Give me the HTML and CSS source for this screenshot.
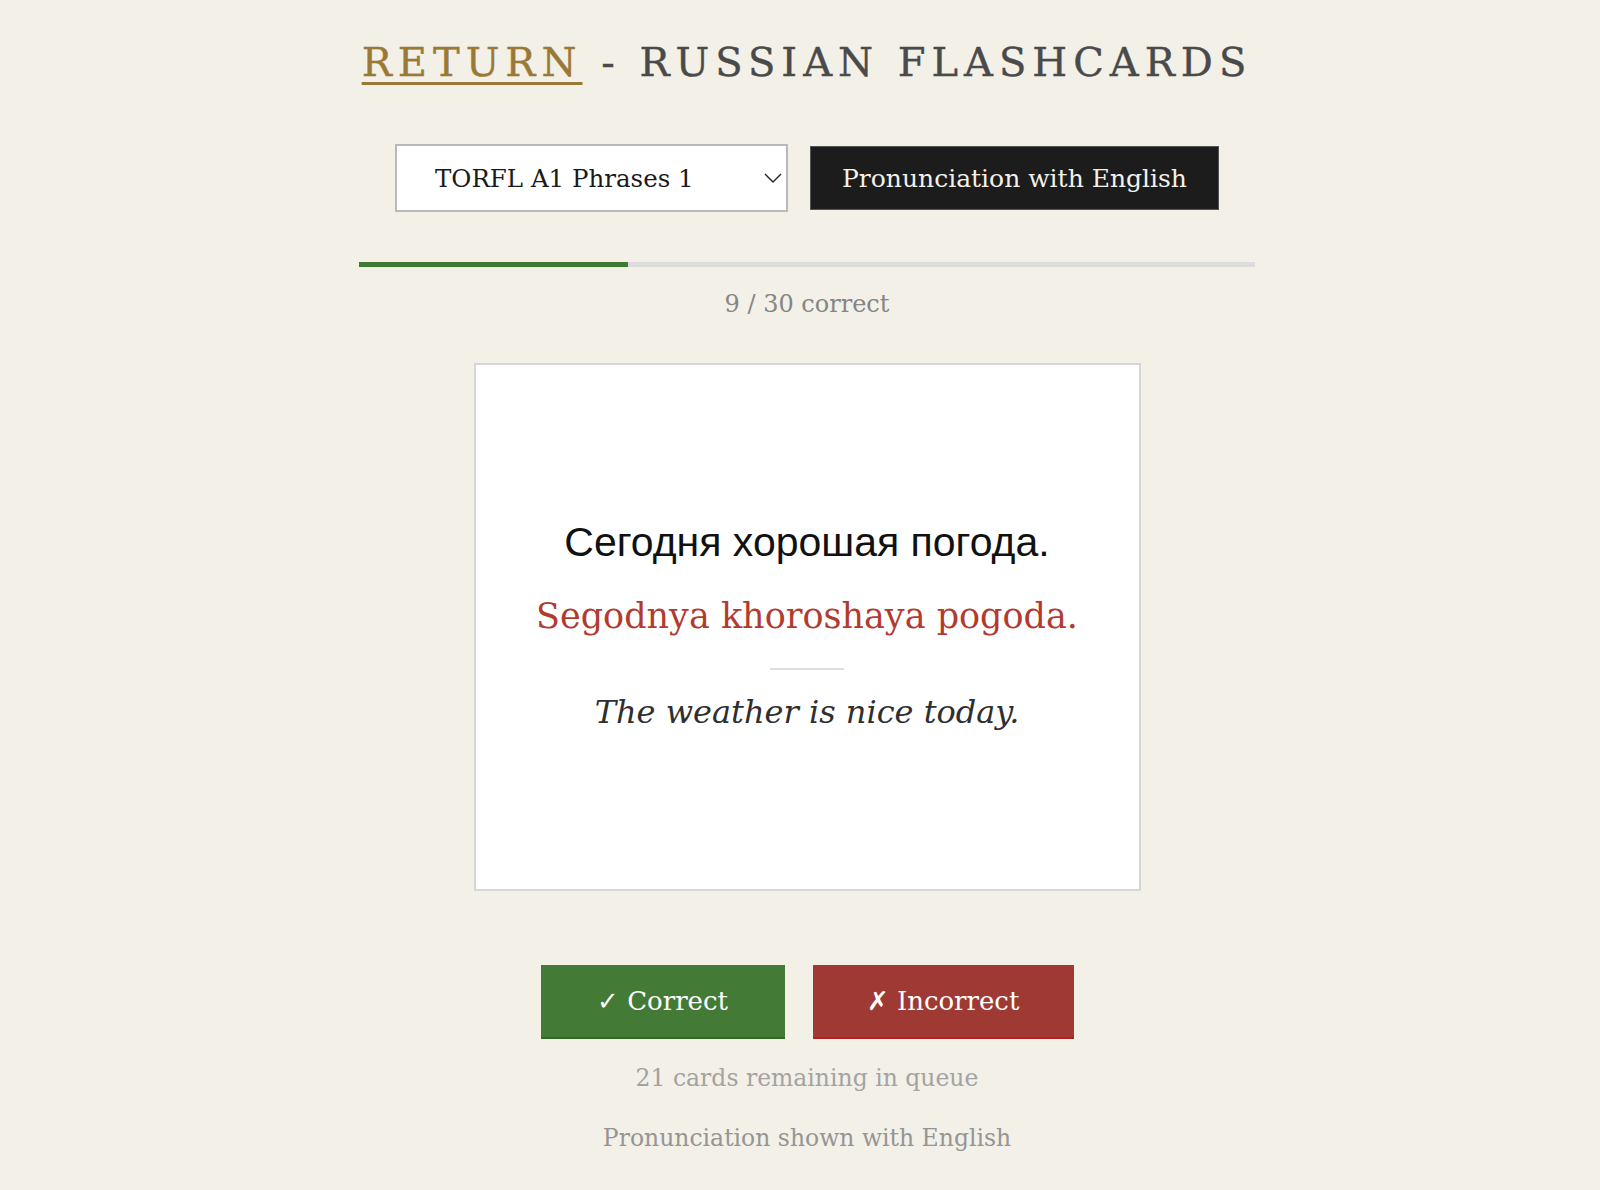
FILE: index.html
```html
<!DOCTYPE html>
<html>
<head>
<meta charset="utf-8">
<title>Russian Flashcards</title>
<link rel="stylesheet" href="styles.css">
</head>

<body>

<div id="page">
<div id="container">
    <h1 class="title"><a href="#" class="return_link">RETURN</a> - RUSSIAN FLASHCARDS</h1>

    <div class="controls">
        <div class="deck_select">
            <select class="deck">
                <option>TORFL A1 Phrases 1</option>
                <option>TORFL A1 Phrases 2</option>
                <option>TORFL A1 Words 1</option>
            </select>
            <svg class="chevron" width="18" height="10" viewBox="0 0 18 10"><path d="M1 1 L9 9 L17 1" fill="none" stroke="#222" stroke-width="1.4"/></svg>
        </div>
        <button class="mode_btn">Pronunciation with English</button>
    </div>

    <div class="progress">
        <div class="progress_fill" style="width: 30%"></div>
    </div>
    <div class="score">9 / 30 correct</div>

    <div class="card">
        <div class="russian">Сегодня хорошая погода.</div>
        <div class="translit">Segodnya khoroshaya pogoda.</div>
        <div class="divider"></div>
        <div class="english">The weather is nice today.</div>
    </div>

    <div class="answers">
        <button class="answer correct">✓ Correct</button>
        <button class="answer incorrect">✗ Incorrect</button>
    </div>

    <div class="remaining">21 cards remaining in queue</div>
    <div class="mode_note">Pronunciation shown with English</div>
</div>
</div>

</body>
</html>
```

FILE: styles.css
```css
body {
    margin: 0;
    padding: 0;
    background: #f3f0e8;
    color: #333;
    font-family: "DejaVu Serif", "Liberation Serif", serif;
}
#page {
    padding-left: 14px;
}
#container {
    margin: 0 auto;
    width: 896px;
    display: flex;
    flex-direction: column;
    align-items: center;
}
.title {
    margin: 37px 0 0 0;
    font-size: 40px;
    line-height: 50px;
    font-weight: normal;
    letter-spacing: 6px;
    color: #4a4a4a;
    white-space: nowrap;
    -webkit-text-stroke: 0.4px currentColor;
}
.return_link {
    color: #9a7936;
    text-decoration: underline;
    text-decoration-thickness: 3px;
    text-underline-offset: 6px;
}
.controls {
    display: flex;
    align-items: center;
    gap: 22px;
    margin-top: 57px;
}
.deck_select {
    position: relative;
}
.deck {
    appearance: none;
    -webkit-appearance: none;
    width: 393px;
    height: 68px;
    padding: 0 0 0 38px;
    border: 2px solid #b9b9b9;
    border-radius: 0;
    background: #fff;
    color: #1a1a1a;
    font-family: "DejaVu Serif", "Liberation Serif", serif;
    font-size: 24.5px;
}
.chevron {
    position: absolute;
    right: 6px;
    top: 29px;
    pointer-events: none;
}
.mode_btn {
    width: 409px;
    height: 64px;
    border: 1px solid #555;
    background: #1c1c1c;
    color: #f3f0e8;
    font-family: "DejaVu Serif", "Liberation Serif", serif;
    font-size: 25px;
}
.progress {
    width: 100%;
    height: 5px;
    margin-top: 50px;
    background: #dcdcdc;
}
.progress_fill {
    height: 100%;
    background: #3f7a34;
}
.score {
    margin-top: 22px;
    font-size: 24px;
    line-height: 30px;
    color: #858585;
}
.card {
    box-sizing: border-box;
    width: 667px;
    height: 528px;
    margin-top: 44px;
    border: 2px solid #d6d6d6;
    background: #fff;
    display: flex;
    flex-direction: column;
    align-items: center;
    justify-content: center;
}
.russian {
    font-family: "Liberation Sans", Arial, sans-serif;
    font-size: 41px;
    line-height: 44px;
    color: #111;
}
.translit {
    margin-top: 30px;
    font-size: 35px;
    line-height: 44px;
    color: #b23b2f;
}
.divider {
    width: 74px;
    height: 2px;
    margin-top: 30px;
    background: #dedede;
}
.english {
    margin-top: 20px;
    font-size: 32px;
    line-height: 44px;
    font-style: italic;
    color: #2f2f2f;
}
.answers {
    display: flex;
    gap: 28px;
    margin-top: 74px;
}
.answer {
    height: 74px;
    color: #fff;
    font-family: "DejaVu Serif", "Liberation Serif", serif;
    font-size: 26px;
    border: none;
}
.correct {
    width: 244px;
    background: #427a36;
    border-bottom: 2px solid #2f6b22;
}
.incorrect {
    width: 261px;
    background: #9e3934;
    border-bottom: 2px solid #b3221c;
}
.remaining {
    margin-top: 24px;
    font-size: 23.5px;
    line-height: 30px;
    color: #a3a3a3;
}
.mode_note {
    margin-top: 30px;
    font-size: 23.5px;
    line-height: 30px;
    color: #959595;
}
```
